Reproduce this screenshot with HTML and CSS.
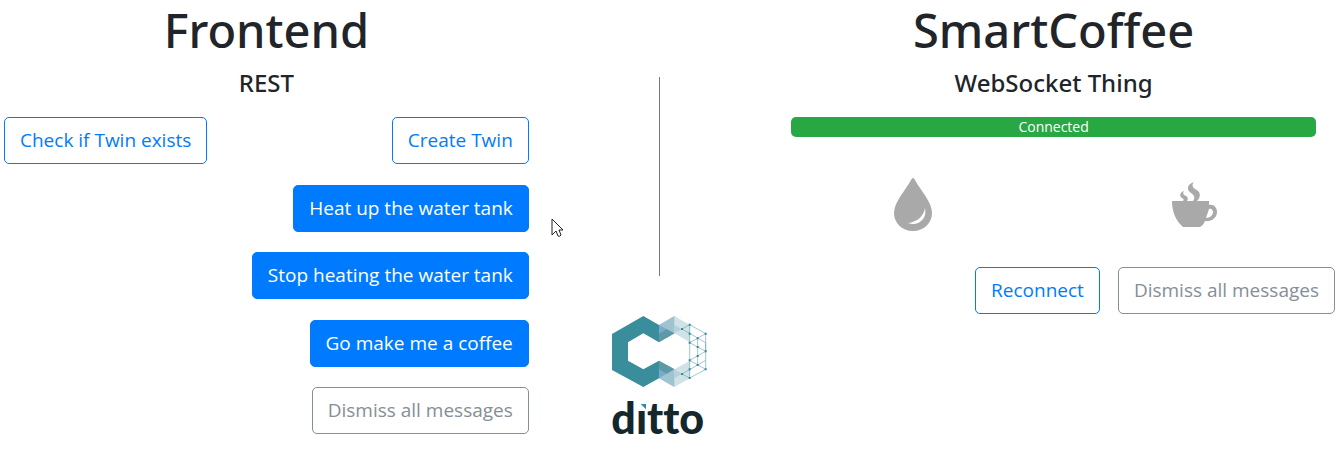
FILE: index.html
```html
<!DOCTYPE html>
<html lang="en">
<head>
<meta charset="utf-8">
<title>SmartCoffee</title>
<meta name="viewport" content="width=device-width, initial-scale=1">
<link rel="stylesheet" href="styles.css">
</head>
<body>
<main class="board">
  <section class="panel">
    <h1 class="title">Frontend</h1>
    <h2 class="subtitle">REST</h2>
    <div class="stack">
      <div class="twin-row">
        <button type="button" class="btn btn-outline">Check if Twin exists</button>
        <button type="button" class="btn btn-outline">Create Twin</button>
      </div>
      <button type="button" class="btn btn-primary">Heat up the water tank</button>
      <button type="button" class="btn btn-primary">Stop heating the water tank</button>
      <button type="button" class="btn btn-primary">Go make me a coffee</button>
      <button type="button" class="btn btn-muted">Dismiss all messages</button>
    </div>
  </section>

  <div class="middle">
    <div class="divider"></div>
    <svg class="logo" viewBox="0 0 285 354" role="img" aria-label="ditto">
      <path fill="#3a8d9a" d="M94 0 0 54v108l94 51 47-26v-53l-47 26-46-26V79l46-27 47 27V27z"/>
      <path fill="#d0e2e5" d="M141 27 187 0l47 27v52l-47-27-46 27zM141 187l46 26 47-26v-53l-47 26-46-26z"/>
      <path fill="#9fc4d0" d="M141 27 187 0v52l-46 27zM141 187l46 26v-53l-46-26z"/>
      <path fill="#b5d2da" d="M187 27 210 40 187 52zM187 187l23-13-23-14z"/>
      <path fill="#78aacb" d="M141 27 187 52 164 66 141 53zM141 187l46-27-23-13-23 13z"/>
      <path fill="#5e99a8" d="M141 53 164 40 187 52 141 79zM141 160l23 13 23-13-46-26z"/>
      <path fill="none" stroke="#6fabb5" stroke-width="2" d="M210 39 233 26 281 53V160L233 186 210 174 281 133M233 26V186M210 39 281 80M257 67V147M281 53 233 80 281 106 233 133 281 160M281 106V80"/>
      <path fill="#358b99" d="M207 36h6v6h-6zM230 23h6v6h-6zM278 50h6v6h-6zM254 64h6v6h-6zM230 50h6v6h-6zM230 77h6v6h-6zM254 90h6v6h-6zM278 103h6v6h-6zM254 117h6v6h-6zM230 130h6v6h-6zM254 144h6v6h-6zM230 157h6v6h-6zM278 157h6v6h-6zM230 183h6v6h-6zM207 171h6v6h-6z"/>
      <text class="wordmark" x="-2" y="353">ditto</text>
      <path fill="#fff" d="M72 248h32v35H72z"/>
      <path fill="#358b99" d="M86 264h16v16z"/>
    </svg>
  </div>

  <section class="panel">
    <h1 class="title">SmartCoffee</h1>
    <h2 class="subtitle">WebSocket Thing</h2>
    <div class="status" role="status">Connected</div>
    <div class="indicators">
      <svg class="icon" viewBox="0 0 60 60" role="img" aria-label="Water">
        <path fill="#a9a9a9" fill-rule="evenodd" d="M30 3q1 0 2 2C38 16 49 27 49 38c0 10-8 18-19 18S11 48 11 38C11 27 22 16 28 5q1-2 2-2zM42 33c-1 8-8 14-17 15 5 2 10 1 13-2 4-3 5-8 4-13z"/>
      </svg>
      <svg class="icon" viewBox="0 0 60 60" role="img" aria-label="Coffee">
        <path fill="#a9a9a9" fill-rule="evenodd" d="M8 26h37v4c5-1 8 3 8 7 0 6-6 10-12 9-1 3-3 5-5 6H19C12 46 8 37 8 26zm37 8c-1 3-2 6-3 9 4 0 7-3 7-6 0-2-2-4-4-3z"/>
        <path fill="#a9a9a9" d="M30 7C23 9 22 15 27 18 31 21 31 23 29 26H33C38 21 36 16 31 14 28 12 28 9 30 7zM20 16C16 17 15 21 18 23 20 24 20 25 19 26H23C25 23 23 21 20 20 19 19 19 17 20 16z"/>
      </svg>
    </div>
    <div class="actions">
      <button type="button" class="btn btn-outline">Reconnect</button>
      <button type="button" class="btn btn-muted">Dismiss all messages</button>
    </div>
  </section>
</main>
<svg class="pointer" width="12" height="20" viewBox="0 0 12 20" aria-hidden="true">
  <path fill="#fff" stroke="#222" d="M1 1v16l4-4 2 5q2 1 3-1l-2-5h4z"/>
</svg>
</body>
</html>
```
FILE: styles.css
```css
* {
  box-sizing: border-box;
}

body {
  margin: 0;
  background: #fff;
  color: #212529;
  font-family: "Open Sans", "Noto Sans", sans-serif;
  font-size: 19px;
}

.board {
  display: grid;
  grid-template-columns: 2fr 1fr 2fr;
  padding: 0 26px 16px 4px;
}

.panel {
  display: flex;
  flex-direction: column;
  min-width: 0;
}

.title,
.subtitle {
  margin: 0;
  font-family: "Noto Sans", "Open Sans", sans-serif;
  font-weight: 500;
  text-align: center;
}

.title {
  font-size: 47px;
  line-height: 60px;
}

.subtitle {
  margin: 8px 0 19px;
  font-size: 24px;
  line-height: 30px;
}

.stack {
  display: flex;
  flex: 1;
  flex-direction: column;
  align-items: flex-end;
  justify-content: space-between;
}

.twin-row {
  display: flex;
  align-self: stretch;
  justify-content: space-between;
}

.btn {
  padding: 8px 15px;
  border: 1px solid;
  border-radius: 5px;
  background: transparent;
  font: inherit;
  line-height: 29px;
  white-space: nowrap;
}

.btn-outline {
  border-color: #007bff;
  color: #007bff;
}

.btn-primary {
  border-color: #007bff;
  background: #007bff;
  color: #fff;
}

.btn-muted {
  border-color: #868e96;
  color: #868e96;
}

.middle {
  display: flex;
  flex-direction: column;
  align-items: center;
  gap: 40px;
  padding-top: 77px;
}

.divider {
  width: 1px;
  height: 199px;
  background: #777;
}

.logo {
  width: 95px;
  height: 118px;
  overflow: visible;
}

.wordmark {
  fill: #14272d;
  font-family: Lato, sans-serif;
  font-size: 129px;
  font-weight: 900;
  font-variant-ligatures: none;
}

.status {
  border-radius: 5px;
  background: #28a745;
  color: #fff;
  font-size: 14px;
  line-height: 20px;
  text-align: center;
}

.indicators {
  display: grid;
  grid-template-columns: 1fr 1fr;
  gap: 36px;
  justify-items: center;
  margin: 38px 0 32px;
}

.icon {
  width: 60px;
  height: 60px;
}

.actions {
  display: flex;
  justify-content: flex-end;
  gap: 18px;
  margin-right: -19px;
}

.pointer {
  position: absolute;
  top: 218px;
  left: 551px;
}
```
